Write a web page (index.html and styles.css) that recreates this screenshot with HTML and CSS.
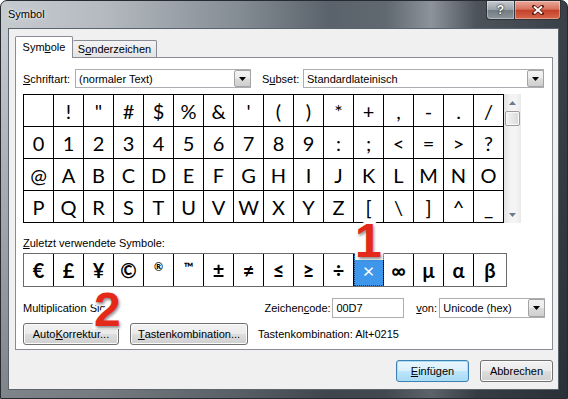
FILE: index.html
```html
<!DOCTYPE html>
<html lang="de">
<head>
<meta charset="utf-8">
<title>Symbol</title>
<link rel="stylesheet" href="styles.css">
</head>
<body>
<div class="window">
  <div class="titlebar">
    <span class="title">Symbol</span>
    <div class="caption-buttons">
      <div class="cap-btn help">?</div>
      <div class="cap-btn close">
        <svg width="12" height="10" viewBox="0 0 12 10"><path d="M2 1.5 L10 8.5 M10 1.5 L2 8.5" stroke="#5a1a10" stroke-width="3.6" stroke-linecap="square"/><path d="M2 1.5 L10 8.5 M10 1.5 L2 8.5" stroke="#fff" stroke-width="2"/></svg>
      </div>
    </div>
  </div>
  <div class="client">
    <div class="tabs">
      <div class="tab active">Sym<u>b</u>ole</div>
      <div class="tab">S<u>o</u>nderzeichen</div>
    </div>
    <div class="panel">
      <div class="font-row">
        <span class="lbl lbl-font"><u>S</u>chriftart:</span>
        <div class="combo combo-font"><span class="combo-text">(normaler Text)</span><span class="combo-btn"><svg width="7" height="4" viewBox="0 0 7 4"><path d="M0 0 H7 L3.5 4 Z" fill="#000"/></svg></span></div>
        <span class="lbl lbl-subset">S<u>u</u>bset:</span>
        <div class="combo combo-subset"><span class="combo-text">Standardlateinisch</span><span class="combo-btn"><svg width="7" height="4" viewBox="0 0 7 4"><path d="M0 0 H7 L3.5 4 Z" fill="#000"/></svg></span></div>
      </div>
      <div class="grid-wrap">
        <div class="grid">
          <div class="cell"></div><div class="cell">!</div><div class="cell">"</div><div class="cell">#</div><div class="cell">$</div><div class="cell">%</div><div class="cell">&amp;</div><div class="cell">'</div><div class="cell">(</div><div class="cell">)</div><div class="cell">*</div><div class="cell">+</div><div class="cell">,</div><div class="cell">-</div><div class="cell">.</div><div class="cell">/</div>
          <div class="cell">0</div><div class="cell">1</div><div class="cell">2</div><div class="cell">3</div><div class="cell">4</div><div class="cell">5</div><div class="cell">6</div><div class="cell">7</div><div class="cell">8</div><div class="cell">9</div><div class="cell">:</div><div class="cell">;</div><div class="cell">&lt;</div><div class="cell">=</div><div class="cell">&gt;</div><div class="cell">?</div>
          <div class="cell">@</div><div class="cell">A</div><div class="cell">B</div><div class="cell">C</div><div class="cell">D</div><div class="cell">E</div><div class="cell">F</div><div class="cell">G</div><div class="cell">H</div><div class="cell">I</div><div class="cell">J</div><div class="cell">K</div><div class="cell">L</div><div class="cell">M</div><div class="cell">N</div><div class="cell">O</div>
          <div class="cell">P</div><div class="cell">Q</div><div class="cell">R</div><div class="cell">S</div><div class="cell">T</div><div class="cell">U</div><div class="cell">V</div><div class="cell">W</div><div class="cell">X</div><div class="cell">Y</div><div class="cell">Z</div><div class="cell">[</div><div class="cell">\</div><div class="cell">]</div><div class="cell">^</div><div class="cell">_</div>
        </div>
        <div class="scrollbar">
          <div class="sb-arrow"><svg width="7" height="4" viewBox="0 0 7 4"><path d="M0 4 H7 L3.5 0 Z" fill="#6a7a90"/></svg></div>
          <div class="sb-thumb"></div>
          <div class="sb-track"></div>
          <div class="sb-arrow"><svg width="7" height="4" viewBox="0 0 7 4"><path d="M0 0 H7 L3.5 4 Z" fill="#6a7a90"/></svg></div>
        </div>
      </div>
      <div class="recent-label"><u>Z</u>uletzt verwendete Symbole:</div>
      <div class="recent">
        <div class="rcell">€</div><div class="rcell">£</div><div class="rcell">¥</div><div class="rcell">©</div><div class="rcell"><span class="sup">®</span></div><div class="rcell"><span class="sup tm">™</span></div><div class="rcell">±</div><div class="rcell">≠</div><div class="rcell">≤</div><div class="rcell">≥</div><div class="rcell">÷</div><div class="rcell selected">×</div><div class="rcell">∞</div><div class="rcell">µ</div><div class="rcell">α</div><div class="rcell last">β</div>
      </div>
      <div class="info-row">
        <span class="char-name">Multiplication Sign</span>
        <span class="lbl lbl-code">Zeichen<u>c</u>ode:</span>
        <div class="input">00D7</div>
        <span class="lbl lbl-von"><u>v</u>on:</span>
        <div class="combo combo-von"><span class="combo-text">Unicode (hex)</span><span class="combo-btn"><svg width="7" height="4" viewBox="0 0 7 4"><path d="M0 0 H7 L3.5 4 Z" fill="#000"/></svg></span></div>
      </div>
      <div class="btn-row">
        <div class="btn btn-auto">Auto<u>K</u>orrektur...</div>
        <div class="btn btn-keys"><u>T</u>astenkombination...</div>
        <span class="shortcut">Tastenkombination: Alt+0215</span>
      </div>
    </div>
    <div class="dialog-buttons">
      <div class="btn btn-dlg default"><u>E</u>infügen</div>
      <div class="btn btn-dlg">Abbrechen</div>
    </div>
  </div>
  <div class="marker m1">1</div>
  <div class="marker m2">2</div>
</div>
</body>
</html>
```
FILE: styles.css
```css
* { box-sizing: border-box; }
html, body { margin: 0; padding: 0; }
body {
  width: 568px;
  height: 399px;
  overflow: hidden;
  background: #fff;
  font-family: "Liberation Sans", Arial, sans-serif;
  font-size: 11px;
  color: #000;
}
.window {
  position: relative;
  width: 568px;
  height: 399px;
  display: flex;
  flex-direction: column;
  border: 1px solid #262b31;
  border-radius: 7px 7px 0 0;
  background:
    linear-gradient(180deg, rgba(0,0,0,0) 0, rgba(0,0,0,0) 30px, rgba(20,25,30,0.4) 100%),
    linear-gradient(90deg, #c6cbd0 0%, #b4bac0 18%, #848c94 42%, #5a626b 58%, #606870 68%, #8c939a 76%, #4c535b 84%, #394048 100%);
}
.titlebar {
  height: 27px;
  display: flex;
  align-items: flex-start;
  padding: 0 6px 0 7px;
}
.title {
  padding-top: 6px;
  line-height: 14px;
  font-size: 11px;
  color: #000;
  text-shadow: 0 0 5px rgba(255,255,255,0.9), 0 0 2px rgba(255,255,255,0.8);
}
.caption-buttons {
  margin-left: auto;
  display: flex;
}
.cap-btn {
  height: 19px;
  display: flex;
  align-items: center;
  justify-content: center;
  border: 1px solid #2e343a;
  border-top: none;
  box-shadow: inset 0 0 0 1px rgba(255,255,255,0.35);
}
.help {
  width: 28px;
  border-right: none;
  border-radius: 0 0 0 4px;
  background: linear-gradient(180deg, #c4cad0 0%, #9aa2aa 48%, #727a82 52%, #8e969e 100%);
  color: #fff;
  font-weight: bold;
  font-size: 12px;
  text-shadow: 0 0 2px #222, 0 0 1px #000;
}
.close {
  width: 47px;
  border-radius: 0 0 4px 0;
  background: linear-gradient(180deg, #e9a898 0%, #d8745f 45%, #c4412a 52%, #d6674b 100%);
}
.client {
  flex: 1;
  margin: 0 8px 8px 7px;
  border: 1px solid #5c636b;
  background: #f0f0f0;
  padding: 7px 5px 0 6px;
  display: flex;
  flex-direction: column;
}
.tabs {
  display: flex;
  align-items: flex-end;
  height: 21px;
  position: relative;
  z-index: 1;
}
.tab {
  height: 17px;
  width: 84px;
  border: 1px solid #898c95;
  border-bottom: none;
  border-left: none;
  background: linear-gradient(180deg, #f3f3f3, #e3e3e3);
  text-align: center;
  line-height: 16px;
  border-radius: 2px 2px 0 0;
}
.tab.active {
  width: 58px;
  height: 22px;
  margin-bottom: -1px;
  border-left: 1px solid #898c95;
  background: #fff;
  line-height: 21px;
}
.panel {
  border: 1px solid #898c95;
  background: #fff;
  padding: 11px 7px 4px 7px;
}
.font-row {
  display: flex;
  align-items: center;
  height: 19px;
}
.lbl { line-height: 14px; white-space: nowrap; }
.lbl-font { width: 52px; }
.lbl-subset { width: 41px; margin-left: 11px; }
.combo {
  height: 19px;
  border: 1px solid #abadb3;
  background: #fff;
  display: flex;
  align-items: center;
}
.combo-text {
  flex: 1;
  padding-left: 3px;
  line-height: 14px;
  white-space: nowrap;
}
.combo-btn {
  width: 17px;
  height: 17px;
  display: flex;
  align-items: center;
  justify-content: center;
  border: 1px solid #a3a3a3;
  border-radius: 2px;
  background: linear-gradient(180deg, #f2f2f2 0%, #ebebeb 48%, #dbdbdb 52%, #cfcfcf 100%);
  margin-right: -1px;
}
.combo-font { width: 176px; }
.combo-subset { width: 241px; }
.grid-wrap {
  display: flex;
  margin-top: 6px;
}
.grid {
  display: grid;
  grid-template-columns: repeat(16, 30px);
  border-left: 1px solid #000;
  border-top: 1px solid #000;
}
.cell {
  height: 32px;
  border-right: 1px solid #000;
  border-bottom: 1px solid #000;
  display: flex;
  align-items: center;
  justify-content: center;
  font-family: "Lato", "Open Sans", "DejaVu Sans", sans-serif;
  font-size: 20px;
  color: #000;
}
.scrollbar {
  width: 17px;
  height: 129px;
  display: flex;
  flex-direction: column;
  background: linear-gradient(90deg, #e3e3e3, #f4f4f4 40%, #f4f4f4 70%, #e9e9e9);
}
.sb-arrow {
  height: 17px;
  display: flex;
  align-items: center;
  justify-content: center;
}
.sb-thumb {
  height: 15px;
  margin: 0 1px;
  border: 1px solid #9c9c9c;
  border-radius: 2px;
  background: linear-gradient(90deg, #f3f3f3, #e7e7e7 50%, #d9d9d9);
  box-shadow: inset 0 0 0 1px #fafafa;
}
.sb-track { flex: 1; }
.recent-label {
  margin-top: 13px;
  line-height: 14px;
}
.recent {
  margin-top: 3px;
  display: flex;
  width: 484px;
  height: 34px;
  border: 1px solid #6a6a6a;
}
.rcell {
  width: 30px;
  border-right: 1px solid #000;
  display: flex;
  align-items: center;
  justify-content: center;
  font-family: "Lato", "Open Sans", "DejaVu Sans", sans-serif;
  font-size: 20px;
  font-weight: bold;
}
.rcell.last { width: 32px; border-right: none; }
.rcell.selected {
  background: #3f97ec;
  color: #fff;
  font-weight: normal;
  outline: 1px dotted #123a6a;
  outline-offset: -1px;
}
.sup {
  font-size: 11px;
  align-self: flex-start;
  margin-top: 6px;
  font-weight: bold;
}
.sup.tm { font-size: 13px; margin-top: 5px; }
.info-row {
  margin-top: 11px;
  display: flex;
  align-items: center;
  height: 20px;
}
.char-name { width: 242px; white-space: nowrap; }
.lbl-code { width: 68px; }
.input {
  width: 72px;
  height: 20px;
  border: 1px solid #abadb3;
  background: #fff;
  padding-left: 3px;
  line-height: 18px;
}
.lbl-von { width: 23px; margin-left: 12px; }
.combo-von { width: 106px; height: 20px; }
.combo-von .combo-btn { height: 18px; }
.btn-row {
  margin-top: 5px;
  display: flex;
  align-items: center;
  height: 22px;
}
.btn {
  height: 22px;
  border: 1px solid #707070;
  border-radius: 3px;
  background: linear-gradient(180deg, #f2f2f2 0%, #ebebeb 48%, #dddddd 52%, #cfcfcf 100%);
  box-shadow: inset 0 0 0 1px #fbfbfb;
  display: flex;
  align-items: center;
  justify-content: center;
  white-space: nowrap;
}
.btn-auto { width: 96px; }
.btn-keys { width: 118px; margin-left: 11px; }
.shortcut { margin-left: 10px; }
.dialog-buttons {
  margin-top: 10px;
  display: flex;
  justify-content: flex-end;
  gap: 11px;
}
.btn-dlg { width: 73px; }
.btn.default {
  border-color: #3c7fb1;
  box-shadow: inset 0 0 0 1px #a9dff6;
  background: linear-gradient(180deg, #eaf6fd 0%, #d9f0fc 48%, #bee6fd 52%, #a7d9f5 100%);
}
.marker {
  position: absolute;
  font-family: "Liberation Sans", Arial, sans-serif;
  font-weight: bold;
  font-size: 48px;
  line-height: 48px;
  color: #e4291a;
  -webkit-text-stroke: 6px #fff;
  paint-order: stroke fill;
  text-shadow: 1px 2px 3px rgba(0,0,0,0.45);
  z-index: 5;
}
.m1 { left: 354px; top: 216px; }
.m2 { left: 93px; top: 285px; }
```
